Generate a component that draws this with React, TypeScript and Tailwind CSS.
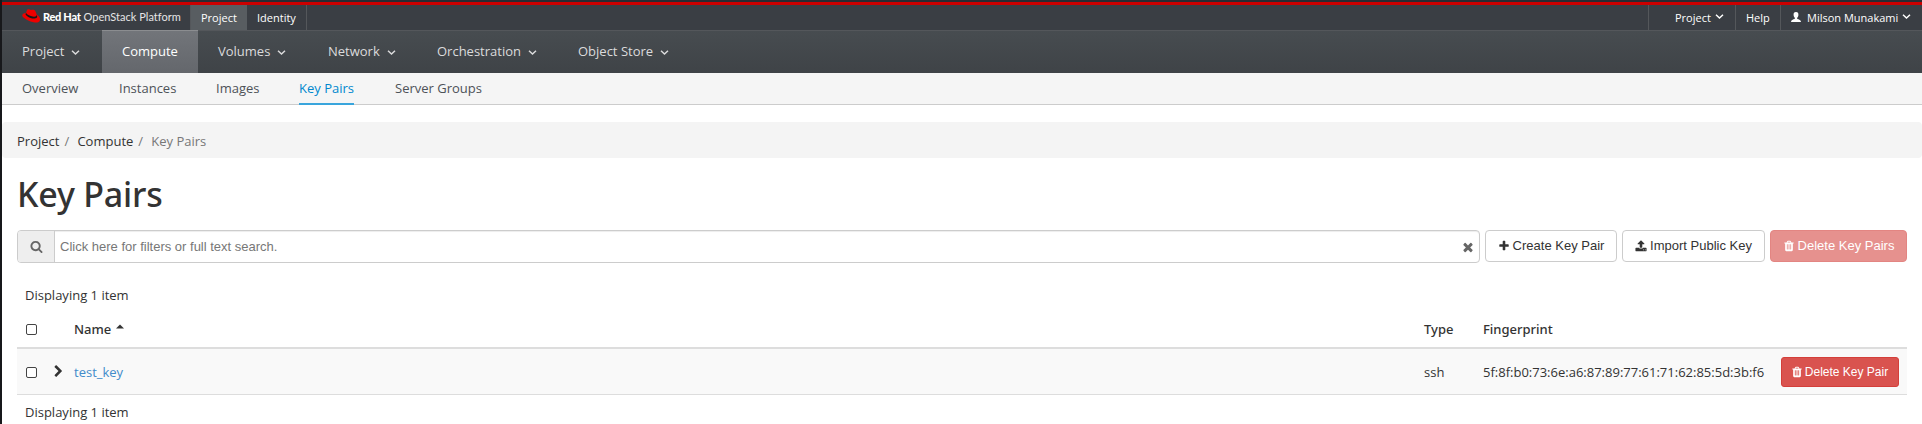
import React from "react";

const icons = {
  plus: "M1600 736v192q0 40-28 68t-68 28h-416v416q0 40-28 68t-68 28h-192q-40 0-68-28t-28-68v-416h-416q-40 0-68-28t-28-68v-192q0-40 28-68t68-28h416v-416q0-40 28-68t68-28h192q40 0 68 28t28 68v416h416q40 0 68 28t28 68z",
  search: "M1216 832q0-185-131.5-316.5t-316.5-131.5-316.5 131.5-131.5 316.5 131.5 316.5 316.5 131.5 316.5-131.5 131.5-316.5zm512 832q0 52-38 90t-90 38q-54 0-90-38l-343-342q-179 124-399 124-143 0-273.5-55.5t-225-150-150-225-55.5-273.5 55.5-273.5 150-225 225-150 273.5-55.5 273.5 55.5 225 150 150 225 55.5 273.5q0 220-124 399l343 343q37 37 37 90z",
  close: "M1490 1322q0 40-28 68l-136 136q-28 28-68 28t-68-28l-294-294-294 294q-28 28-68 28t-68-28l-136-136q-28-28-28-68t28-68l294-294-294-294q-28-28-28-68t28-68l136-136q28-28 68-28t68 28l294 294 294-294q28-28 68-28t68 28l136 136q28 28 28 68t-28 68l-294 294 294 294q28 28 28 68z",
  upload: "M1344 1472q0-26-19-45t-45-19-45 19-19 45 19 45 45 19 45-19 19-45zm256 0q0-26-19-45t-45-19-45 19-19 45 19 45 45 19 45-19 19-45zm128-224v320q0 40-28 68t-68 28h-1472q-40 0-68-28t-28-68v-320q0-40 28-68t68-28h427q21 56 70.5 92t110.5 36h256q61 0 110.500-36t70.500-92h427q40 0 68 28t28 68zm-325-648q-17 40-59 40h-256v448q0 26-19 45t-45 19h-256q-26 0-45-19t-19-45v-448h-256q-42 0-59-40-17-39 14-69l448-448q18-19 45-19t45 19l448 448q31 30 14 69z",
  trash: "M704 1376v-704q0-14-9-23t-23-9h-64q-14 0-23 9t-9 23v704q0 14 9 23t23 9h64q14 0 23-9t9-23zm256 0v-704q0-14-9-23t-23-9h-64q-14 0-23 9t-9 23v704q0 14 9 23t23 9h64q14 0 23-9t9-23zm256 0v-704q0-14-9-23t-23-9h-64q-14 0-23 9t-9 23v704q0 14 9 23t23 9h64q14 0 23-9t9-23zm-544-992h448l-48-117q-7-9-17-11h-317q-10 2-17 11zm928 32v64q0 14-9 23t-23 9h-96v948q0 83-47 143.5t-113 60.5h-832q-66 0-113-58.5t-47-141.5v-952h-96q-14 0-23-9t-9-23v-64q0-14 9-23t23-9h309l70-167q15-37 54-63t79-26h320q40 0 79 26t54 63l70 167h309q14 0 23 9t9 23z",
  chevronRight: "M1363 877l-742 742q-19 19-45 19t-45-19l-166-166q-19-19-19-45t19-45l531-531-531-531q-19-19-19-45t19-45l166-166q19-19 45-19t45 19l742 742q19 19 19 45t-19 45z",
};

function Icon({ name, className }: { name: keyof typeof icons; className: string }) {
  return (
    <svg viewBox="0 0 1792 1792" fill="currentColor" className={`shrink-0 ${className}`}>
      <path d={icons[name]} />
    </svg>
  );
}

function Caret({ className }: { className: string }) {
  return (
    <svg viewBox="0 0 13 13" fill="none" stroke="currentColor" strokeWidth="1.5" className={`size-[13px] shrink-0 ${className}`}>
      <path d="M3 4.800 6.500 8 10 4.800" />
    </svg>
  );
}

function Hat() {
  return (
    <svg viewBox="0 0 18 14" className="h-[14px] w-[18px] shrink-0">
      <path fill="#e00" d="M4 4 5 1C5.300 0.200 6.100 0 7 0.300L9 1C10 0.700 11.500 0.300 12.600 1.200 13.600 2.100 14.200 4 14.800 5.800 17 6.800 18.300 9 18 11 17.500 13.500 14.500 14 11.500 13.200 7.500 12.300 3.500 10.300 1.200 8.200-0.700 6.200 0.500 4.400 4 4Z" />
      <path fill="#17181a" d="M4 4 3.500 5.300C4.500 7.700 9 9.800 12.500 9.500 14 9.400 15.300 8.700 15.200 7.500L14.800 5.800C14.700 7.200 13.500 7.800 12 7.700 9 7.600 5.500 6 4 4Z" />
    </svg>
  );
}

const mainNav = [
  { label: "Project", width: "w-[100px]", menu: true },
  { label: "Compute", width: "w-24", active: true },
  { label: "Volumes", width: "w-[110px]", menu: true },
  { label: "Network", width: "w-[109px]", menu: true },
  { label: "Orchestration", width: "w-[141px]", menu: true },
  { label: "Object Store", width: "w-[131px]", menu: true },
];

const subNav = [
  { label: "Overview", width: "w-[97px]" },
  { label: "Instances", width: "w-[97px]" },
  { label: "Images", width: "w-[83px]" },
  { label: "Key Pairs", width: "w-24", active: true },
  { label: "Server Groups", width: "w-28" },
];

function TopBar() {
  return (
    <div className="flex h-[26px] items-stretch border-b border-[#54575b] bg-[#3a3e44] text-[11px] leading-[26px] font-medium text-white">
      <div className="flex w-[188px] items-start pt-1 pl-5">
        <Hat />
        <span className="ml-[3px] font-['Lato'] text-[11px] leading-[15px] font-black tracking-[-0.3px] whitespace-nowrap">Red Hat</span>
        <span className="ml-[3px] font-['Lato'] text-[11px] leading-[15px] font-normal tracking-[0.02px] whitespace-nowrap text-[#e5e5e6]">OpenStack Platform</span>
      </div>
      <div className="w-[57px] border-l border-[#54575b] bg-[#585d61] pl-[10px]">Project</div>
      <div className="w-[60px] border-r border-[#54575b] pl-[10px]">Identity</div>
      <div className="ml-auto flex w-[87px] items-center border-l border-[#54575b] pl-[26px]">
        Project <Caret className="mb-0.5 ml-[2px]" />
      </div>
      <div className="w-[45px] border-l border-[#54575b] pl-[10px]">Help</div>
      <div className="flex w-[142px] items-center border-l border-[#54575b] pl-[10px]">
        <svg viewBox="0 0 10 10" fill="currentColor" className="mb-px size-[10px]">
          <path d="M5 0C6.800 0 7.600 1.200 7.400 3 7.300 4.300 6.800 5.200 6.200 5.700V7C8 7.400 10 8 10 10H0C0 8 2 7.400 3.800 7V5.700C3.200 5.200 2.700 4.300 2.600 3 2.400 1.200 3.200 0 5 0Z" />
        </svg>
        <span className="ml-[6px] whitespace-nowrap">Milson Munakami</span>
        <Caret className="mb-0.5 ml-[2px]" />
      </div>
    </div>
  );
}

function Checkbox() {
  return <span className="block size-[11px] rounded-[2px] border border-[#444] bg-white" />;
}

export default function App() {
  return (
    <div className="h-[424px] w-[1922px] overflow-hidden border-l-2 border-[#17181b] bg-white font-['Open_Sans',sans-serif] text-[13px] text-[#333]">
      <div className="h-[5px] border-t-2 border-[#292c33] bg-[#c00]" />
      <TopBar />
      <nav className="flex h-[42px] bg-linear-to-b from-[#474c50] to-[#3f4347] text-[13px] leading-[41px] text-[#dbdbdc]">
        {mainNav.map((item) => (
          <div
            key={item.label}
            className={`flex shrink-0 items-center pl-5 ${item.width} ${item.active ? "-mt-px border-t border-[#8b8d90] bg-linear-to-b from-[#72757a] to-[#64676c] pb-px text-white" : "pb-[2px]"}`}
          >
            {item.label}
            {item.menu && <Caret className="mt-0.5 ml-[5px]" />}
          </div>
        ))}
      </nav>
      <nav className="flex h-8 border-b border-[#ccc] bg-[#f5f5f5] pl-5 leading-[31px] text-[#4d5258]">
        {subNav.map((item) => (
          <div key={item.label} className={`shrink-0 ${item.width}`}>
            <span className={item.active ? "inline-block h-8 border-b-2 border-[#39a5dc] text-[#0088ce]" : ""}>{item.label}</span>
          </div>
        ))}
      </nav>

      <div className="mt-[17px] flex h-9 items-center rounded bg-[#f4f4f4] px-[15px] pt-[3px]">
        <span>Project</span>
        <span className="ml-[5px] w-[13px] text-[#777]">/</span>
        <span>Compute</span>
        <span className="ml-[5px] w-[13px] text-[#777]">/</span>
        <span className="text-[#777]">Key Pairs</span>
      </div>

      <main className="px-[15px]">
        <h1 className="mt-[15px] h-[57px] font-['Noto_Sans','Open_Sans',sans-serif] text-[34px] leading-[42px] font-medium tracking-[-0.2px]">Key Pairs</h1>
        <div className="flex h-[33px] items-start font-['Liberation_Sans',sans-serif] text-[13px]">
          <div className="flex h-[33px] w-[1463px] items-center rounded border border-[#ccc] bg-white shadow-[inset_0_1px_1px_rgba(0,0,0,0.075)]">
            <div className="flex h-full w-[37px] items-center justify-center rounded-l-[3px] border-r border-[#ccc] bg-[#eee] text-[#666]">
              <Icon name="search" className="size-[13px]" />
            </div>
            <span className="pl-[5px] text-[#777]">Click here for filters or full text search.</span>
            <Icon name="close" className="mr-1 ml-auto size-[14px] text-[#666]" />
          </div>
          <button className="ml-[5px] flex h-8 w-[132px] items-center justify-center gap-[3px] rounded border border-[#ccc] bg-white whitespace-nowrap">
            <Icon name="plus" className="size-3" /> Create Key Pair
          </button>
          <button className="ml-[5px] flex h-8 w-[143px] items-center justify-center gap-[3px] rounded border border-[#ccc] bg-white whitespace-nowrap">
            <Icon name="upload" className="size-3" /> Import Public Key
          </button>
          <button className="ml-[5px] flex h-8 w-[137px] items-center justify-center gap-[3px] rounded border border-[#e38582] bg-[#e6918e] whitespace-nowrap text-white">
            <Icon name="trash" className="size-3" /> Delete Key Pairs
          </button>
        </div>

        <div className="mt-4 h-[33px] pl-2 leading-8">Displaying 1 item</div>
        <div className="flex h-[37px] items-center border-b-2 border-[#ddd] pl-[9px] font-['Noto_Sans','Open_Sans',sans-serif] font-medium">
          <div className="w-12"><Checkbox /></div>
          <div className="flex w-[1350px]">
            Name
            <svg viewBox="0 0 8 4" fill="currentColor" className="mt-[4px] ml-[5px] h-[5px] w-2">
              <path d="M4 0 8 4H0Z" />
            </svg>
          </div>
          <div className="w-[59px]">Type</div>
          <div>Fingerprint</div>
        </div>
        <div className="flex h-[46px] items-center border-b border-[#ddd] bg-[#f9f9f9] pl-[9px]">
          <div className="w-[26px] pt-0.5"><Checkbox /></div>
          <div className="w-[22px]"><Icon name="chevronRight" className="size-[13px]" /></div>
          <div className="w-[1350px] pt-0.5 text-[#428bca]">test_key</div>
          <div className="w-[59px] pt-0.5">ssh</div>
          <div className="w-[298px] pt-0.5">5f:8f:b0:73:6e:a6:87:89:77:61:71:62:85:5d:3b:f6</div>
          <button className="flex h-[30px] w-[118px] items-center justify-center gap-0.5 rounded-[3px] border border-[#d43f3a] bg-[#d9534f] pr-px font-['Liberation_Sans',sans-serif] text-[12px] whitespace-nowrap text-white">
            <Icon name="trash" className="size-3" /> Delete Key Pair
          </button>
        </div>
        <div className="h-9 pl-2 leading-[34px]">Displaying 1 item</div>
      </main>
    </div>
  );
}
